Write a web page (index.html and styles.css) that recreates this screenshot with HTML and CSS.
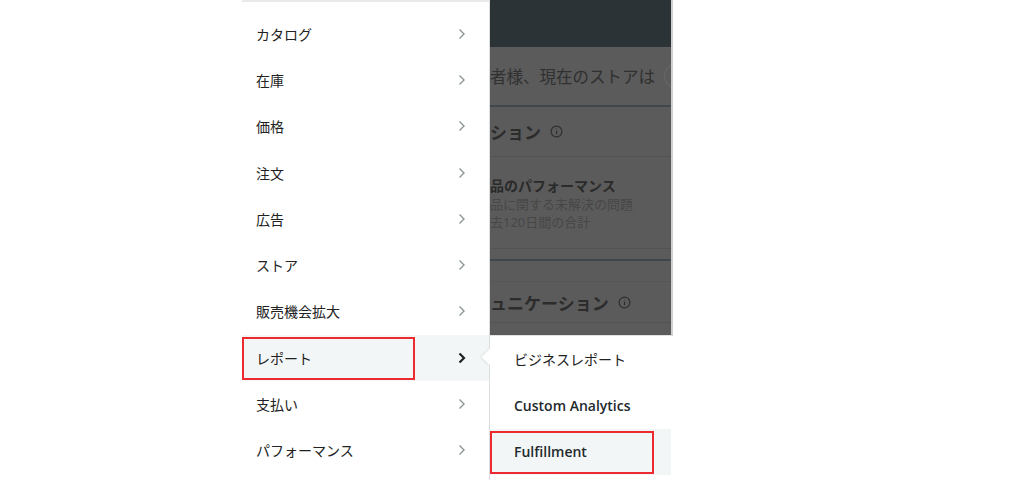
FILE: index.html
```html
<!DOCTYPE html>
<html lang="ja">
<head>
    <meta charset="UTF-8">
    <meta name="viewport" content="width=device-width, initial-scale=1.0">
    <title>メニュー - レポート</title>
    <link rel="stylesheet" href="styles.css">
</head>
<body>
    <div class="page">
        <nav class="menu">
            <ul class="menu-list">
                <li class="menu-item"><span>カタログ</span><svg class="chev" viewBox="0 0 8 12"><path d="M1.5 1.5 6 6l-4.5 4.5"/></svg></li>
                <li class="menu-item"><span>在庫</span><svg class="chev" viewBox="0 0 8 12"><path d="M1.5 1.5 6 6l-4.5 4.5"/></svg></li>
                <li class="menu-item"><span>価格</span><svg class="chev" viewBox="0 0 8 12"><path d="M1.5 1.5 6 6l-4.5 4.5"/></svg></li>
                <li class="menu-item"><span>注文</span><svg class="chev" viewBox="0 0 8 12"><path d="M1.5 1.5 6 6l-4.5 4.5"/></svg></li>
                <li class="menu-item"><span>広告</span><svg class="chev" viewBox="0 0 8 12"><path d="M1.5 1.5 6 6l-4.5 4.5"/></svg></li>
                <li class="menu-item"><span>ストア</span><svg class="chev" viewBox="0 0 8 12"><path d="M1.5 1.5 6 6l-4.5 4.5"/></svg></li>
                <li class="menu-item"><span>販売機会拡大</span><svg class="chev" viewBox="0 0 8 12"><path d="M1.5 1.5 6 6l-4.5 4.5"/></svg></li>
                <li class="menu-item active"><span>レポート</span><svg class="chev" viewBox="0 0 8 12"><path d="M1.5 1.5 6 6l-4.5 4.5"/></svg><i class="mark mark-report"></i></li>
                <li class="menu-item"><span>支払い</span><svg class="chev" viewBox="0 0 8 12"><path d="M1.5 1.5 6 6l-4.5 4.5"/></svg></li>
                <li class="menu-item"><span>パフォーマンス</span><svg class="chev" viewBox="0 0 8 12"><path d="M1.5 1.5 6 6l-4.5 4.5"/></svg></li>
            </ul>
        </nav>

        <div class="side">
            <!-- page behind the dimmed overlay, only its right part shows -->
            <div class="backdrop">
                <div class="bd-header"></div>
                <div class="bd-body">
                    <div class="bd-greeting">
                        <span class="bd-text">者様、現在のストアは</span>
                        <i class="bd-pill"></i>
                    </div>
                    <div class="bd-card-title">
                        <span class="bd-text">ション</span>
                        <svg class="info" viewBox="0 0 14 14"><circle cx="7" cy="7" r="5.8"/><path d="M7 6v4M7 3.8v.6"/></svg>
                    </div>
                    <div class="bd-perf">
                        <div class="perf-title">品のパフォーマンス</div>
                        <div class="perf-sub">品に関する未解決の問題</div>
                        <div class="perf-sub">去120日間の合計</div>
                    </div>
                    <div class="bd-gap"></div>
                    <div class="bd-card-title comm">
                        <span class="bd-text">ュニケーション</span>
                        <svg class="info" viewBox="0 0 14 14"><circle cx="7" cy="7" r="5.8"/><path d="M7 6v4M7 3.8v.6"/></svg>
                    </div>
                </div>
            </div>

            <ul class="submenu">
                <i class="pointer"></i>
                <li class="sub-item">ビジネスレポート</li>
                <li class="sub-item latin">Custom Analytics</li>
                <li class="sub-item latin active">Fulfillment<i class="mark mark-fulfil"></i></li>
            </ul>
        </div>
    </div>
</body>
</html>
```

FILE: styles.css
```css
body {
    margin: 0;
    background: #fff;
    font-family: "Noto Sans", "Noto Sans CJK JP", sans-serif;
    color: #111;
}

.page {
    display: flex;
    padding-left: 242px;
    height: 480px;
    overflow: hidden;
}

/* left menu */
.menu {
    width: 248px;
    border-top: 2px solid #e8eaea;
    border-right: 1px solid #dcdfdf;
    box-sizing: border-box;
}
.menu-list {
    list-style: none;
    margin: 0;
    padding: 8.5px 0 0;
}
.menu-item {
    position: relative;
    display: flex;
    align-items: center;
    justify-content: space-between;
    height: 46.3px;
    padding: 0 23px 0 14px;
    font-size: 14px;
    color: #222;
}
.menu-item.active {
    background: #f3f6f6;
}
.chev {
    width: 8px;
    height: 12px;
    fill: none;
    stroke: #8d9696;
    stroke-width: 1.4;
}
.menu-item.active .chev {
    stroke: #222;
    stroke-width: 2.2;
}

/* annotation boxes */
.mark {
    position: absolute;
    border: 2px solid #ec2a2f;
    box-sizing: border-box;
    pointer-events: none;
}
.mark-report {
    left: 0;
    top: 2px;
    width: 173px;
    height: 43px;
}
.mark-fulfil {
    left: 0;
    top: 2px;
    width: 164px;
    height: 43px;
}

/* right column */
.side {
    width: 183px;
    display: flex;
    flex-direction: column;
}
.backdrop {
    height: 336px;
    border-right: 2px solid #cfcfcf;
    border-bottom: 1px solid #e2e2e2;
    box-sizing: border-box;
    display: flex;
    flex-direction: column;
}
.bd-header {
    height: 47px;
    background: #2b3336;
}
.bd-body {
    flex: 1;
    background: #5b5b5b;
    overflow: hidden;
    color: #2c2c2c;
    white-space: nowrap;
}
.bd-text {
    flex: none;
}
.bd-greeting {
    display: flex;
    align-items: center;
    height: 58px;
    border-bottom: 2px solid #40474a;
    font-size: 16.5px;
    color: #303030;
}
.bd-pill {
    flex: none;
    width: 24px;
    height: 24px;
    margin-left: 9px;
    border: 1px solid #6a6a6a;
    border-radius: 50%;
}
.bd-card-title {
    display: flex;
    align-items: center;
    height: 49px;
    border-bottom: 1px solid #535353;
    font-size: 17px;
    font-weight: 700;
}
.info {
    width: 13px;
    height: 13px;
    margin-left: 9px;
    fill: none;
    stroke: #2f2f2f;
    stroke-width: 1.3;
}
.bd-perf {
    height: 92px;
    padding-top: 20px;
    box-sizing: border-box;
    border-bottom: 1px solid #535353;
}
.perf-title {
    font-size: 14px;
    font-weight: 700;
    line-height: 18px;
    color: #2a2a2a;
}
.perf-sub {
    font-size: 13px;
    line-height: 18px;
    color: #474747;
}
.bd-gap {
    height: 20px;
    border-top: 2px solid #40474a;
    border-bottom: 1px dotted #525252;
    margin-top: 10px;
}
.bd-card-title.comm {
    height: 40px;
}

/* submenu */
.submenu {
    position: relative;
    list-style: none;
    margin: 0;
    padding: 0;
    width: 181px;
}
.pointer {
    position: absolute;
    left: -6px;
    top: 15px;
    width: 12px;
    height: 12px;
    background: #fff;
    transform: rotate(45deg);
    box-shadow: -1px 1px 2px rgba(0, 0, 0, 0.08);
}
.sub-item {
    position: relative;
    display: flex;
    align-items: center;
    height: 46.3px;
    padding-left: 24px;
    font-size: 14px;
    color: #222;
}
.sub-item.latin {
    font-family: "Open Sans", "Noto Sans", sans-serif;
    font-weight: 600;
    color: #1e2a2e;
}
.sub-item.active {
    background: #f3f6f6;
}
```
